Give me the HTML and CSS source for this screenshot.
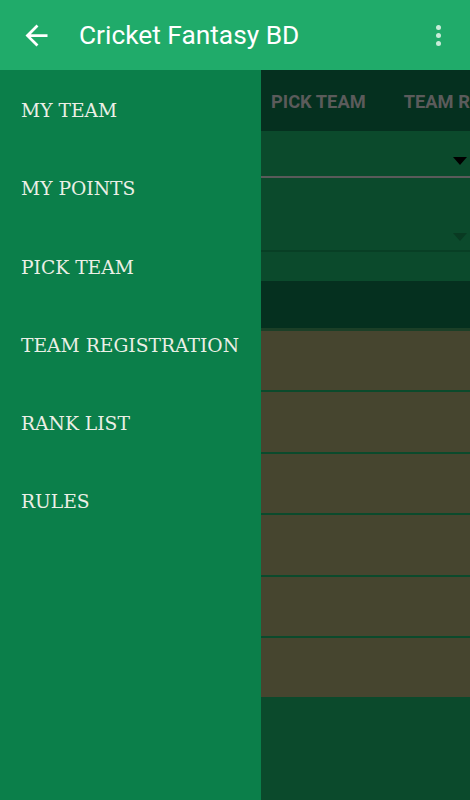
FILE: index.html
```html
<!DOCTYPE html>
<html>
<head>
<meta charset="utf-8">
<link rel="stylesheet" href="styles.css">
</head>
<body>
<div class="screen">
  <header class="appbar">
    <svg class="back" width="33" height="33" viewBox="0 0 24 24"><path d="M20 11H7.83l5.59-5.59L12 4l-8 8 8 8 1.41-1.41L7.83 13H20v-2z" fill="#fff"/></svg>
    <span class="title">Cricket Fantasy BD</span>
    <div class="more"><i></i><i></i><i></i></div>
  </header>
  <div class="body">
    <nav class="drawer">
      <div class="item">MY TEAM</div>
      <div class="item">MY POINTS</div>
      <div class="item">PICK TEAM</div>
      <div class="item">TEAM REGISTRATION</div>
      <div class="item">RANK LIST</div>
      <div class="item">RULES</div>
    </nav>
    <main class="content">
      <div class="tabs"><span class="tab">PICK TEAM</span><span class="tab">TEAM REGISTRATION</span></div>
      <div class="spinner s1"><span class="tri"></span></div>
      <div class="spinner s2"><span class="tri dim"></span></div>
      <div class="blank"></div>
      <div class="dark"></div>
      <div class="rows">
        <div class="row"></div>
        <div class="row"></div>
        <div class="row"></div>
        <div class="row"></div>
        <div class="row"></div>
        <div class="row"></div>
      </div>
    </main>
  </div>
</div>
</body>
</html>
```
FILE: styles.css
```css
* { box-sizing: border-box; }
html, body { margin: 0; padding: 0; }
body { width: 470px; height: 800px; overflow: hidden; background: #0b4a2c; }
.screen { width: 470px; height: 800px; display: flex; flex-direction: column; }
.appbar {
  height: 70px; background: #20ab6a; display: flex; align-items: center;
  padding-left: 19.5px; flex-shrink: 0;
}
.back { width: 33px; height: 33px; flex-shrink: 0; }
.title {
  font-family: Roboto, sans-serif; font-size: 26.3px; color: #fff;
  margin-left: 26.5px; flex: 1; white-space: nowrap;
}
.more { display: flex; flex-direction: column; gap: 3px; margin-right: 29px; }
.more i { width: 5px; height: 5px; border-radius: 50%; background: #c9ecd9; display: block; }
.body { flex: 1; display: flex; }
.drawer {
  width: 261px; background: #0b7f4a; padding-top: 16px; flex-shrink: 0;
}
.item {
  height: 78.3px; line-height: 50px; padding-left: 21px;
  font-family: "DejaVu Serif", serif; font-size: 18.7px; color: #ecefe6; white-space: nowrap;
}
.content { flex: 1; overflow: hidden; display: flex; flex-direction: column; background: #0b4a2c; }
.tabs {
  height: 61px; background: #05301f; display: flex; align-items: center; gap: 38px;
  padding-left: 10px; padding-top: 2px; white-space: nowrap; flex-shrink: 0;
}
.tab { font-family: Roboto, sans-serif; font-weight: bold; font-size: 18.3px; color: #5b5b5b; }
.spinner { position: relative; background: #0b4a2c; flex-shrink: 0; }
.s1 { height: 47px; border-bottom: 2px solid #5a5a5a; }
.s2 { height: 74px; border-bottom: 2px solid #083f25; }
.tri { position: absolute; right: 3px; width: 0; height: 0; border-left: 7px solid transparent; border-right: 7px solid transparent; border-top: 8px solid #000; }
.s1 .tri { top: 26px; }
.s2 .tri { top: 55px; }
.tri.dim { border-top-color: #093a22; }
.blank { height: 29px; background: #0b4a2c; flex-shrink: 0; }
.dark { height: 50px; background: #05301f; border-bottom: 3px solid #1b3f27; flex-shrink: 0; }
.rows { display: flex; flex-direction: column; gap: 2px; flex-shrink: 0; }
.row { height: 59.4px; background: #46452f; }
```
